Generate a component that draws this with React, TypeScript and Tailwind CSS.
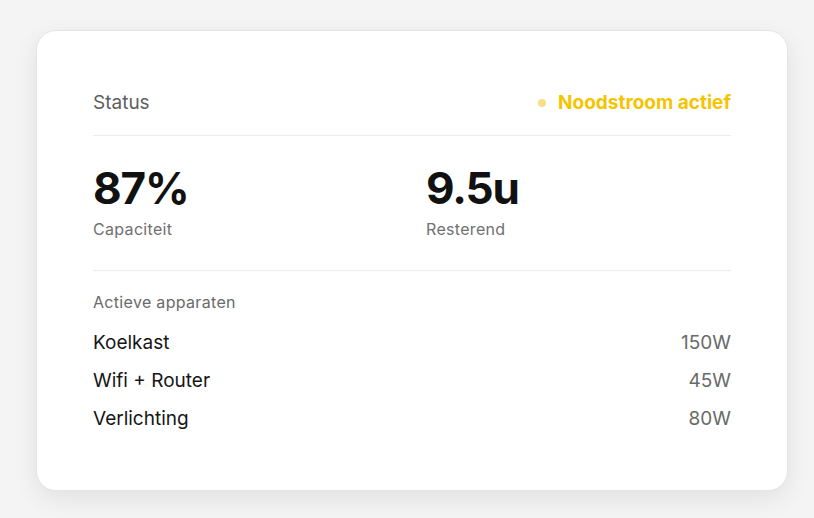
export default function App() {
  const devices = [
    { name: 'Koelkast', watt: '150W' },
    { name: 'Wifi + Router', watt: '45W' },
    { name: 'Verlichting', watt: '80W' },
  ]

  return (
    <div
      className="min-h-screen w-full bg-[#f4f4f4] pt-[30px] pl-[36px]"
      style={{ fontFamily: 'Inter, "Noto Sans", sans-serif' }}
    >
      <div className="w-[752px] h-[461px] rounded-[20px] border border-[#e4e4e4] bg-white px-14 pt-[58px] pb-14 shadow-[0_8px_24px_rgba(0,0,0,0.08)]">
        {/* Header */}
        <div className="flex items-center justify-between border-b border-[#ececec] pb-[18px]">
          <span className="text-[19px] leading-7 text-[#5f5f5f]">Status</span>
          <div className="flex items-center gap-3">
            <span className="h-2 w-2 rounded-full bg-[#f6df86]" />
            <span className="text-[19px] leading-7 font-bold text-[#f5c400]">Noodstroom actief</span>
          </div>
        </div>

        {/* Stats */}
        <div className="grid grid-cols-2 gap-7 border-b border-[#ececec] pt-[30px] pb-[30px]">
          <div>
            <div className="text-[44px] leading-none font-bold tracking-tight text-[#111]">87%</div>
            <div className="mt-2 text-[16px] leading-[22px] tracking-[0.02em] text-[#707070]">Capaciteit</div>
          </div>
          <div>
            <div className="text-[44px] leading-none font-bold tracking-tight text-[#111]">9.5u</div>
            <div className="mt-2 text-[16px] leading-[22px] tracking-[0.02em] text-[#707070]">Resterend</div>
          </div>
        </div>

        {/* Devices */}
        <div className="pt-5">
          <div className="text-[16px] leading-[22px] tracking-[0.02em] text-[#6a6a6a]">Actieve apparaten</div>
          <div className="mt-4 flex flex-col gap-2.5">
            {devices.map((d) => (
              <div key={d.name} className="flex items-center justify-between text-[19px] leading-7">
                <span className="text-[#161616]">{d.name}</span>
                <span className="text-[#6a6a6a]">{d.watt}</span>
              </div>
            ))}
          </div>
        </div>
      </div>
    </div>
  )
}
